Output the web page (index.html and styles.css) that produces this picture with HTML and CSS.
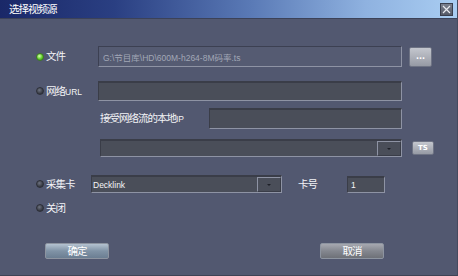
FILE: index.html
```html
<!doctype html>
<html lang="zh-CN">

<head>
  <meta charset="UTF-8" />
  <title>选择视频源</title>
  <link rel="stylesheet" href="styles.css">
</head>

<body>
  <div class="window">
    <div class="titlebar">
      <span class="title">选择视频源</span>
      <span class="close">
        <svg width="9" height="9" viewBox="0 0 9 9"><path d="M1 1L8 8M8 1L1 8" stroke="#e8eaf0" stroke-width="1.2" /></svg>
      </span>
    </div>

    <div class="body">
      <!-- 文件 -->
      <div class="row row-file">
        <label class="opt"><span class="radio on"></span><span>文件</span></label>
        <div class="field field-file">G:\节目库\HD\600M-h264-8M码率.ts</div>
        <button class="btn-small btn-dots">...</button>
      </div>

      <!-- 网络URL -->
      <div class="row row-url">
        <label class="opt"><span class="radio"></span><span>网络<span class="lat">URL</span></span></label>
        <div class="field field-dark field-url"></div>
      </div>

      <div class="row row-ip">
        <span class="ip-label">接受网络流的本地<span class="lat">IP</span></span>
        <div class="field field-dark field-ip"></div>
      </div>

      <div class="row row-ts">
        <div class="combo combo-ts">
          <span class="combo-text"></span>
          <span class="combo-arrow"></span>
        </div>
        <button class="btn-small btn-ts">TS</button>
      </div>

      <!-- 采集卡 -->
      <div class="row row-card">
        <label class="opt opt-card"><span class="radio"></span><span>采集卡</span></label>
        <div class="combo combo-card">
          <span class="combo-text">Decklink</span>
          <span class="combo-arrow"></span>
        </div>
        <span class="card-label">卡号</span>
        <div class="field field-dark field-num">1</div>
      </div>

      <!-- 关闭 -->
      <div class="row row-off">
        <label class="opt"><span class="radio"></span><span>关闭</span></label>
      </div>

      <div class="row row-buttons">
        <button class="btn btn-ok">确定</button>
        <button class="btn btn-cancel">取消</button>
      </div>
    </div>
  </div>
</body>

</html>
```

FILE: styles.css
```css
body {
  margin: 0;
  background-color: #525870;
  font-family: "Liberation Sans", "Noto Sans CJK SC", sans-serif;
  color: #f2f3f6;
}

.window {
  width: 458px;
  height: 276px;
  box-sizing: border-box;
  background-color: #525870;
  border-right: 1px solid #454a5e;
  border-bottom: 1px solid #3f4355;
  display: flex;
  flex-direction: column;
}

.titlebar {
  height: 19px;
  flex-shrink: 0;
  display: flex;
  align-items: center;
  justify-content: space-between;
  padding: 0 4px 0 9px;
  background: linear-gradient(to right, #1a2868 0%, #2a3f82 25%, #5a7ab6 55%, #8fb2e0 80%, #a9cdf2 100%);
  border-bottom: 1px solid #3c4258;
  box-sizing: border-box;
}

.title {
  font-size: 10.5px;
  letter-spacing: -1px;
  line-height: 1;
  color: #ffffff;
}

.close {
  width: 13px;
  height: 13px;
  box-sizing: border-box;
  border: 1px solid #3a3f4e;
  background: linear-gradient(#7a808e, #555a68);
  display: flex;
  align-items: center;
  justify-content: center;
}

.body {
  display: flex;
  flex-direction: column;
}

.row {
  display: flex;
  align-items: center;
  padding-left: 36px;
}

.opt {
  display: flex;
  align-items: center;
  font-size: 10.5px;
  letter-spacing: -1px;
  line-height: 1;
  width: 62px;
  flex-shrink: 0;
}

.lat {
  font-size: 8.5px;
  letter-spacing: 0;
}

.opt-card {
  width: 55px;
}

.radio {
  width: 8px;
  height: 8px;
  border-radius: 50%;
  box-sizing: border-box;
  margin-right: 2px;
  background: radial-gradient(circle at 40% 35%, #6d7280, #33363e 70%);
  border: 1px solid #2c2f38;
}

.radio.on {
  background: radial-gradient(circle at 40% 35%, #d8ffb0, #5fcf2a 55%, #2f8a10);
  border-color: #3d7a22;
}

.field {
  box-sizing: border-box;
  font-size: 8.5px;
  display: flex;
  align-items: center;
  padding-left: 4px;
  border-top: 1px solid #3c4052;
  border-left: 1px solid #3c4052;
  border-right: 1px solid #8e93a4;
  border-bottom: 1px solid #8e93a4;
}

.row-file {
  margin-top: 27px;
}

.field-file {
  width: 304px;
  height: 21px;
  color: #a2a7b6;
  background-color: #555b72;
}

.field-dark {
  background-color: #4a4e59;
  border-top: 2px solid #3a3d48;
  border-left: 1px solid #3a3d48;
}

.btn-small {
  margin-left: 7px;
  padding: 0;
  border: 1px solid #6e7384;
  border-radius: 2px;
  background: linear-gradient(#c4c7ce, #969aa4);
  color: #ffffff;
  font-family: "DejaVu Sans", sans-serif;
  font-weight: bold;
  font-size: 8px;
}

.btn-dots {
  width: 23px;
  height: 20px;
}

.row-url {
  margin-top: 14px;
}

.field-url {
  width: 304px;
  height: 20px;
}

.row-ip {
  margin-top: 7px;
  padding-left: 100px;
}

.ip-label {
  font-size: 10.5px;
  letter-spacing: -1px;
  line-height: 1;
  width: 109px;
}

.field-ip {
  width: 193px;
  height: 21px;
}

.row-ts {
  margin-top: 10px;
  padding-left: 100px;
}

.combo {
  box-sizing: border-box;
  display: flex;
  background-color: #4a4e59;
  border-top: 2px solid #3a3d48;
  border-left: 1px solid #3a3d48;
  border-right: 1px solid #8e93a4;
  border-bottom: 1px solid #8e93a4;
}

.combo-text {
  flex: 1;
  font-size: 8.5px;
  display: flex;
  align-items: center;
  padding-left: 1px;
  color: #f4f5f8;
}

.combo-arrow {
  width: 24px;
  box-sizing: border-box;
  border: 1px solid #8e93a4;
  border-right-color: #3a3d48;
  border-bottom-color: #3a3d48;
  display: flex;
  align-items: center;
  justify-content: center;
}

.combo-arrow::after {
  content: "";
  border-left: 2px solid transparent;
  border-right: 2px solid transparent;
  border-top: 2px solid #1e2028;
}

.combo-ts {
  width: 302px;
  height: 18px;
}

.btn-ts {
  margin-left: 10px;
  width: 22px;
  height: 14px;
  font-size: 7px;
}

.row-card {
  margin-top: 18px;
}

.combo-card {
  width: 191px;
  height: 18px;
}

.card-label {
  font-size: 10.5px;
  letter-spacing: -1px;
  line-height: 1;
  margin-left: 16px;
  width: 49px;
}

.field-num {
  width: 38px;
  height: 17px;
  color: #f4f5f8;
  padding-left: 3px;
}

.row-off {
  margin-top: 8px;
  height: 14px;
}

.row-buttons {
  margin-top: 28px;
  padding-left: 45px;
}

.btn {
  width: 64px;
  height: 16px;
  padding: 0;
  border: 1px solid #8d94a0;
  border-radius: 2px;
  color: #ffffff;
  font-family: "Noto Sans CJK SC", sans-serif;
  font-size: 10.5px;
  letter-spacing: -1px;
  line-height: 1;
}

.btn-ok {
  background: linear-gradient(#b4c2d0, #8093a6 50%, #6b7e92);
}

.btn-cancel {
  margin-left: 211px;
  background: linear-gradient(#a6a8b0, #84878f 50%, #6e7178);
}
```
